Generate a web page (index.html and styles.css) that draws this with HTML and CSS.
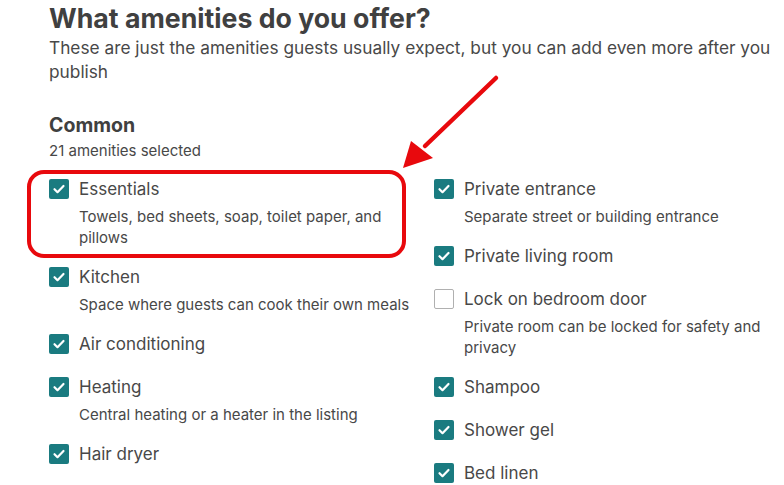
FILE: index.html
```html
<!DOCTYPE html>
<html lang="en">
<head>
<meta charset="utf-8">
<title>Amenities</title>
<link rel="stylesheet" href="styles.css">
</head>
<body>
<main class="page">
  <h1 class="title">What amenities do you offer?</h1>
  <p class="subtitle">These are just the amenities guests usually expect, but you can add even more after you publish</p>

  <section class="group">
    <h2 class="group-title">Common</h2>
    <p class="group-count">21 amenities selected</p>

    <div class="grid">
      <div class="col">
        <label class="item">
          <span class="box checked"><svg viewBox="0 0 20 20"><path d="M5.5 10.2l3 3 6-6.2"/></svg></span>
          <span class="text"><span class="name">Essentials</span><span class="desc">Towels, bed sheets, soap, toilet paper, and pillows</span></span>
        </label>
        <label class="item">
          <span class="box checked"><svg viewBox="0 0 20 20"><path d="M5.5 10.2l3 3 6-6.2"/></svg></span>
          <span class="text"><span class="name">Kitchen</span><span class="desc">Space where guests can cook their own meals</span></span>
        </label>
        <label class="item">
          <span class="box checked"><svg viewBox="0 0 20 20"><path d="M5.5 10.2l3 3 6-6.2"/></svg></span>
          <span class="text"><span class="name">Air conditioning</span></span>
        </label>
        <label class="item">
          <span class="box checked"><svg viewBox="0 0 20 20"><path d="M5.5 10.2l3 3 6-6.2"/></svg></span>
          <span class="text"><span class="name">Heating</span><span class="desc">Central heating or a heater in the listing</span></span>
        </label>
        <label class="item">
          <span class="box checked"><svg viewBox="0 0 20 20"><path d="M5.5 10.2l3 3 6-6.2"/></svg></span>
          <span class="text"><span class="name">Hair dryer</span></span>
        </label>
      </div>
      <div class="col">
        <label class="item">
          <span class="box checked"><svg viewBox="0 0 20 20"><path d="M5.5 10.2l3 3 6-6.2"/></svg></span>
          <span class="text"><span class="name">Private entrance</span><span class="desc">Separate street or building entrance</span></span>
        </label>
        <label class="item">
          <span class="box checked"><svg viewBox="0 0 20 20"><path d="M5.5 10.2l3 3 6-6.2"/></svg></span>
          <span class="text"><span class="name">Private living room</span></span>
        </label>
        <label class="item">
          <span class="box"></span>
          <span class="text"><span class="name">Lock on bedroom door</span><span class="desc">Private room can be locked for safety and privacy</span></span>
        </label>
        <label class="item">
          <span class="box checked"><svg viewBox="0 0 20 20"><path d="M5.5 10.2l3 3 6-6.2"/></svg></span>
          <span class="text"><span class="name">Shampoo</span></span>
        </label>
        <label class="item">
          <span class="box checked"><svg viewBox="0 0 20 20"><path d="M5.5 10.2l3 3 6-6.2"/></svg></span>
          <span class="text"><span class="name">Shower gel</span></span>
        </label>
        <label class="item">
          <span class="box checked"><svg viewBox="0 0 20 20"><path d="M5.5 10.2l3 3 6-6.2"/></svg></span>
          <span class="text"><span class="name">Bed linen</span></span>
        </label>
      </div>
    </div>
  </section>

  <svg class="annotation" width="784" height="485" viewBox="0 0 784 485">
    <rect x="29" y="172" width="375" height="84" rx="15" ry="15" fill="none" stroke="#e8090d" stroke-width="4"/>
    <line x1="496" y1="78" x2="425" y2="146" stroke="#e8090d" stroke-width="4.5" stroke-linecap="round"/>
    <polygon points="403,168 411,141 433,158" fill="#e8090d"/>
  </svg>
</main>
</body>
</html>
```

FILE: styles.css
```css
html, body {
  margin: 0;
  padding: 0;
  background: #ffffff;
}

body {
  font-family: Inter, "Noto Sans", "Liberation Sans", sans-serif;
  color: #484848;
  overflow: hidden;
}

.page {
  position: relative;
  width: 770px;
  padding: 0 0 0 49px;
}

.title {
  margin: 0;
  padding-top: 2px;
  font-size: 26.7px;
  line-height: 32px;
  font-weight: 700;
  color: #404040;
}

.subtitle {
  margin: 2px 0 0;
  font-size: 17.3px;
  line-height: 24px;
}

.group {
  margin-top: 30px;
}

.group-title {
  margin: 0;
  font-size: 19.5px;
  line-height: 22px;
  font-weight: 700;
  color: #404040;
}

.group-count {
  margin: 4px 0 0;
  font-size: 15px;
  line-height: 22px;
}

.grid {
  display: grid;
  grid-template-columns: 369px 369px;
  column-gap: 16px;
  margin-top: 15px;
}

.col {
  display: flex;
  flex-direction: column;
  gap: 19px;
}

.item {
  display: flex;
  align-items: flex-start;
  gap: 10px;
}

.box {
  flex: 0 0 auto;
  width: 20px;
  height: 20px;
  margin-top: 2px;
  box-sizing: border-box;
  border: 1px solid #b0b0b0;
  border-radius: 2px;
  background: #fff;
}

.box.checked {
  border: none;
  background: #1a7b80;
}

.box svg {
  display: block;
  width: 20px;
  height: 20px;
  fill: none;
  stroke: #ffffff;
  stroke-width: 2.2;
  stroke-linecap: round;
  stroke-linejoin: round;
}

.text {
  display: flex;
  flex-direction: column;
}

.name {
  font-size: 17px;
  line-height: 24px;
}

.desc {
  margin-top: 5px;
  margin-bottom: -2px;
  font-size: 15px;
  line-height: 21px;
}

.annotation {
  position: absolute;
  left: 0;
  top: 0;
  pointer-events: none;
}
```
